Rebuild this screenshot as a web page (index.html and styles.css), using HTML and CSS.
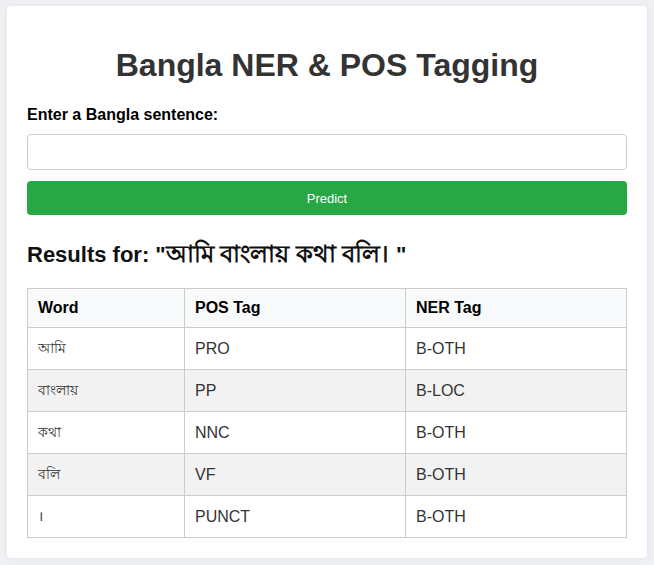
FILE: index.html
```html
<!DOCTYPE html>
<html lang="en">
<head>
<meta charset="utf-8">
<title>Bangla NER &amp; POS Tagging</title>
<link rel="stylesheet" href="styles.css">
</head>
<body>
<div class="card">
  <h1 class="title">Bangla NER &amp; POS Tagging</h1>
  <form class="form">
    <label class="label" for="sentence">Enter a Bangla sentence:</label>
    <input class="input" id="sentence" type="text">
    <button class="btn" type="button">Predict</button>
  </form>
  <h2 class="results">Results for: "<span class="bn-h">আমি বাংলায় কথা বলি। </span>"</h2>
  <table class="tbl">
    <colgroup><col class="c1"><col class="c2"><col class="c3"></colgroup>
    <thead>
      <tr><th>Word</th><th>POS Tag</th><th>NER Tag</th></tr>
    </thead>
    <tbody>
      <tr><td class="bn">আমি</td><td>PRO</td><td>B-OTH</td></tr>
      <tr><td class="bn">বাংলায়</td><td>PP</td><td>B-LOC</td></tr>
      <tr><td class="bn">কথা</td><td>NNC</td><td>B-OTH</td></tr>
      <tr><td class="bn">বলি</td><td>VF</td><td>B-OTH</td></tr>
      <tr><td class="bn">।</td><td>PUNCT</td><td>B-OTH</td></tr>
    </tbody>
  </table>
</div>
</body>
</html>
```
FILE: styles.css
```css
html, body {
  margin: 0;
  padding: 0;
}
body {
  background: #eef0f3;
  font-family: "Liberation Sans", Arial, sans-serif;
  color: #333;
  padding: 6px 7px;
}
.card {
  width: 600px;
  background: #fff;
  padding: 20px;
  border-radius: 4px;
  box-shadow: 0 0 6px rgba(0,0,0,0.06);
}
.title {
  font-size: 32px;
  line-height: 37px;
  text-align: center;
  color: #333;
  margin: 21px 0 22px;
}
.form {
  display: flex;
  flex-direction: column;
}
.label {
  font-weight: bold;
  font-size: 16px;
  line-height: 18px;
  color: #000;
  margin-bottom: 10px;
}
.input {
  box-sizing: border-box;
  height: 36px;
  border: 1px solid #ccc;
  border-radius: 4px;
  padding: 8px;
  font-size: 16px;
  margin: 0;
}
.btn {
  margin-top: 11px;
  height: 34px;
  border: none;
  border-radius: 4px;
  background: #28a745;
  color: #fff;
  font-family: "Liberation Sans", Arial, sans-serif;
  font-size: 13px;
}
.results {
  font-size: 22px;
  line-height: 26px;
  height: 26px;
  color: #111;
  margin: 26px 0 21px;
}
.bn-h {
  font-size: 23.5px;
  line-height: 26px;
}
.tbl {
  width: 100%;
  border-collapse: collapse;
  table-layout: fixed;
  font-size: 16px;
}
.c1 { width: 157px; }
.c2 { width: 221px; }
.tbl th, .tbl td {
  border: 1px solid #ccc;
  text-align: left;
}
.tbl th {
  line-height: 18px;
  padding: 10px;
  background: #f8f9fa;
  color: #000;
}
.tbl td {
  line-height: 17px;
  padding: 12px 10px;
  color: #333;
}
.tbl tbody tr:nth-child(even) {
  background: #f2f2f2;
}
.bn {
  font-size: 14px;
}
```
